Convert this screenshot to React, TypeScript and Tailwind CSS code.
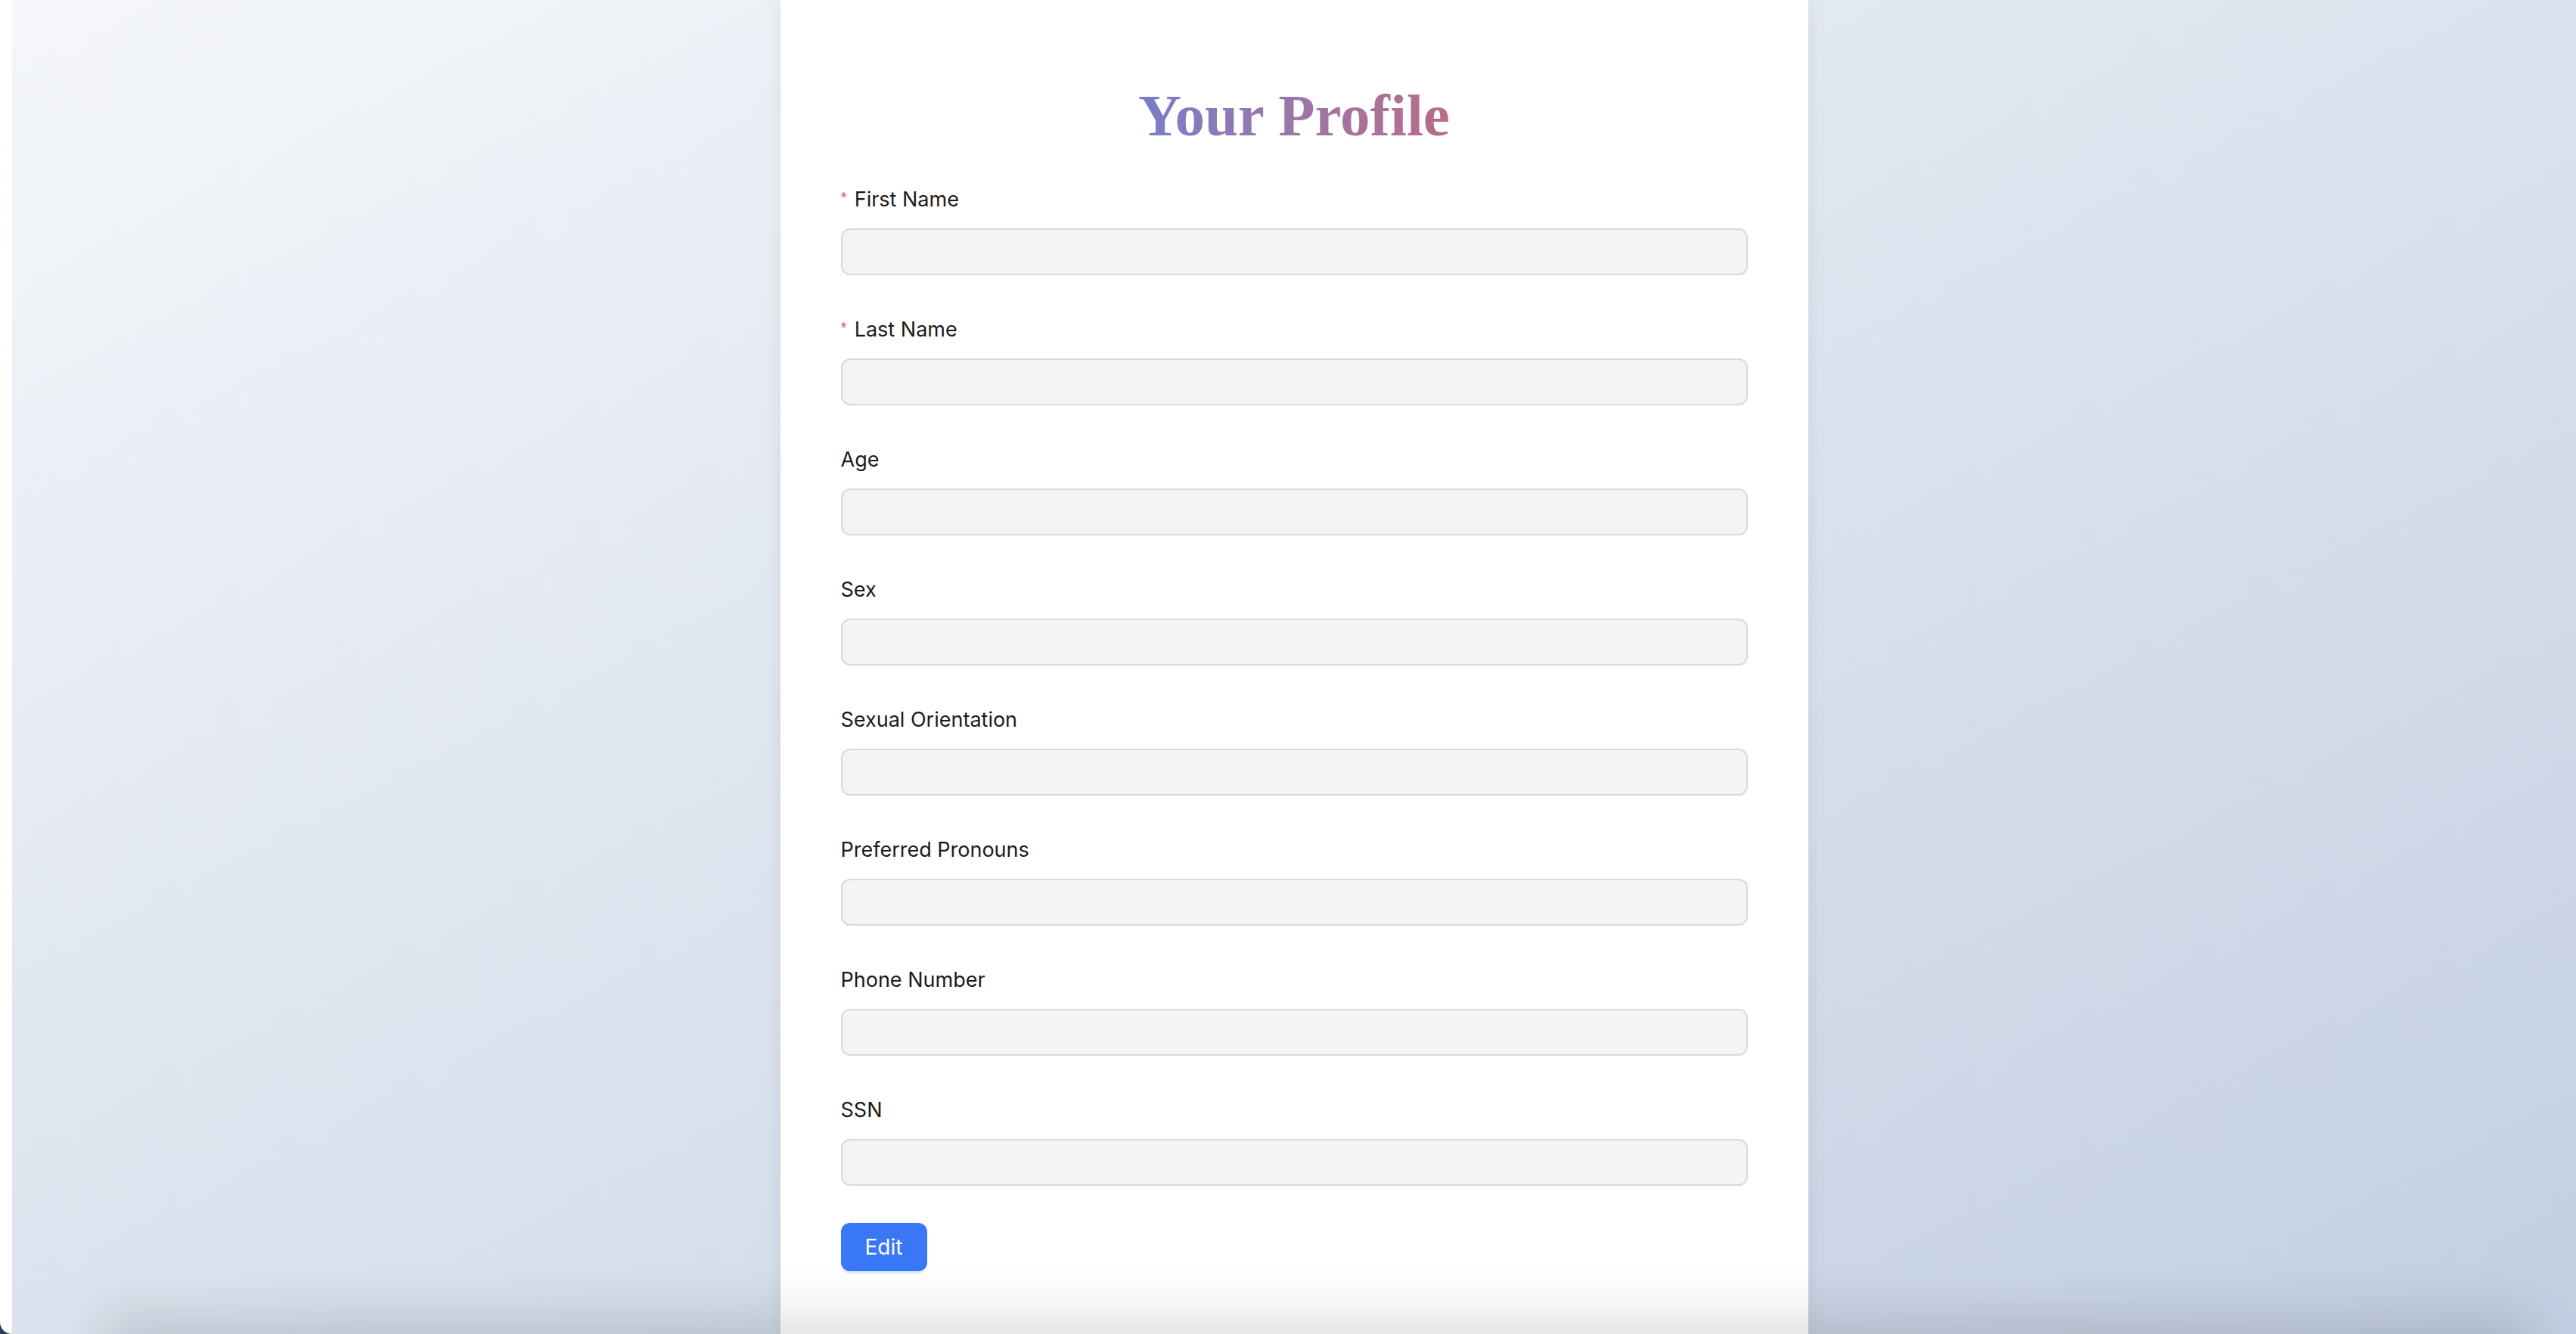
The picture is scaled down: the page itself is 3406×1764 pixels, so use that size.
const fields = [
  { label: "First Name", required: true },
  { label: "Last Name", required: true },
  { label: "Age" },
  { label: "Sex" },
  { label: "Sexual Orientation" },
  { label: "Preferred Pronouns" },
  { label: "Phone Number" },
  { label: "SSN" },
];

const Profile = () => {
  return (
    <div className="relative flex h-[1764px] w-full overflow-hidden bg-[#2b3d5a]">
      {/* thin left rail */}
      <div className="h-full w-4 shrink-0 rounded-bl-[16px] bg-white" />

      <main className="flex h-full flex-1 justify-center bg-linear-to-br from-[#f5f7fa] to-[#c3cfe2]">
        <section className="flex h-full w-[1359px] shrink-0 flex-col bg-white px-[80px] pt-[106px] shadow-[0_0_24px_rgba(0,0,0,0.08)]">
          <div className="mb-[46px] flex justify-center">
            <h1 className="inline-block bg-linear-to-r from-[#787dc8] to-[#b96b88] bg-clip-text font-['Liberation_Serif',serif] text-[79px] leading-[94px] font-bold text-transparent">
              Your Profile
            </h1>
          </div>

          <form className="flex flex-col gap-[54px] font-['Inter',sans-serif]">
            {fields.map((f) => (
              <div key={f.label} className="flex flex-col">
                <label className="mb-[20px] flex h-[36px] items-center text-[27px] text-[#1a1a1a]">
                  {f.required && (
                    <span className="mr-[10px] -mt-[8px] font-['Liberation_Sans',sans-serif] text-[21px] leading-none text-[#ff4d4f]">
                      *
                    </span>
                  )}
                  {f.label}
                </label>
                <input
                  disabled
                  className="h-[62px] w-full rounded-[12px] border-2 border-[#d9d9d9] bg-[#f4f4f4] px-4 text-[24px]"
                />
              </div>
            ))}
          </form>

          <div className="mt-[49px]">
            <button className="h-[64px] w-[114px] rounded-[12px] bg-[#3a77f6] font-['Inter',sans-serif] text-[28px] text-white shadow-[0_4px_0_rgba(5,145,255,0.1)]">
              Edit
            </button>
          </div>
        </section>
      </main>

      {/* shadow cast by the bar just below the window */}
      <div className="pointer-events-none absolute top-full right-[80px] left-[160px] h-[60px] bg-[#2b3d5a] shadow-[0_0_70px_24px_rgba(0,0,0,0.13)]" />
    </div>
  );
};

export default function App() {
  return <Profile />;
}
